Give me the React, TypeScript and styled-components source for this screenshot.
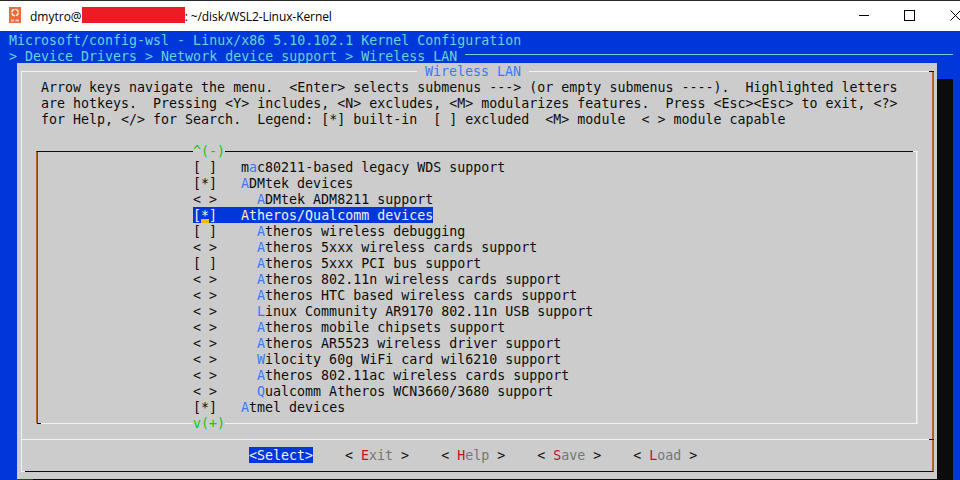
import styled, { createGlobalStyle } from 'styled-components'

const GlobalStyle = createGlobalStyle`
  html, body {
    margin: 0;
    padding: 0;
    background: #0037da;
  }
  body {
    width: 960px;
    height: 480px;
    overflow: hidden;
  }
`

const Window = styled.div`
  width: 960px;
  height: 480px;
  overflow: hidden;
  display: flex;
  flex-direction: column;
`

const TitleBar = styled.div`
  flex: 0 0 31px;
  box-sizing: border-box;
  display: flex;
  align-items: center;
  background: #ffffff;
  border-top: 1px solid #2a2a2a;
  padding-left: 9px;
  font-family: 'Open Sans', sans-serif;
  font-size: 12px;
  color: #000000;
`

const AppIcon = styled.svg`
  width: 12px;
  height: 16px;
  margin: 0 9px 2px 0;
  flex: none;
`

const Redacted = styled.span`
  display: inline-block;
  width: 103px;
  height: 16px;
  margin-bottom: 2px;
  background: #ed1c24;
`

const TitleText = styled.span`
  white-space: pre;
`

const TitlePath = styled(TitleText)`
  letter-spacing: -0.08px;
`

const Controls = styled.div`
  margin: 0 -1px 2px auto;
  display: flex;
  align-items: center;
  gap: 35px;
`

const ControlIcon = styled.svg`
  width: 11px;
  height: 11px;
  display: block;
`

const Terminal = styled.div`
  flex: 1;
  min-height: 0;
  background: #0037da;
  font-family: 'DejaVu Sans Mono', monospace;
  font-size: 13.3px;
  line-height: 16px;
  white-space: pre;
  color: #0c0c0c;
`

const Header = styled.div`
  box-sizing: border-box;
  height: 32px;
  padding: 2px 7px 0 9px;
  color: #61d6d6;
`

const HeaderLine = styled.div`
  height: 16px;
`

const Breadcrumb = styled(HeaderLine)`
  display: flex;
`

const Rule = styled.span`
  flex: 1;
  height: 1px;
  margin-top: 5px;
  background: #61d6d6;
`

const Dialog = styled.div`
  position: relative;
  box-sizing: border-box;
  width: 920px;
  height: 416px;
  margin-left: 17px;
  padding: 8px 3px 7px 4px;
  background: #cccccc;
  box-shadow: 16px 16px 0 #0c0c0c;
`

const Frame = styled.div`
  position: relative;
  box-sizing: border-box;
  height: 100%;
  display: flex;
  flex-direction: column;
  border-top: 1px solid #f2f2f2;
  border-left: 1px solid #f2f2f2;
  border-right: 1px solid #3a78c0;
  border-bottom: 1px solid #0c0c0c;
  box-shadow: inset -1px 0 0 #b5691f;

  &::before {
    content: '';
    position: absolute;
    top: -1px;
    right: -1px;
    width: 5px;
    height: 1px;
    background: #0c0c0c;
  }

  &::after {
    content: '';
    position: absolute;
    bottom: -1px;
    left: -1px;
    width: 4px;
    height: 1px;
    background: #f2f2f2;
  }
`

const DialogTitle = styled.div`
  position: absolute;
  z-index: 1;
  top: 1px;
  left: 400px;
  height: 16px;
  padding: 0 8px;
  background: #cccccc;
  color: #3b78ff;
`

const HelpText = styled.div`
  padding: 8px 0 0 19px;
  height: 56px;
  flex: none;
`

const MenuBox = styled.div`
  position: relative;
  box-sizing: border-box;
  flex: none;
  width: 882px;
  height: 273px;
  margin: 15px 0 0 14px;
  padding-top: 7px;
  border-top: 1px solid #0c0c0c;
  border-left: 1px solid #b5691f;
  border-right: 1px solid #d4e2ee;
  border-bottom: 1px solid #f2f2f2;
  box-shadow: inset 1px 0 0 #2c5aa0, inset -1px 0 0 #f2f2f2;

  &::before {
    content: '';
    position: absolute;
    top: -1px;
    right: -1px;
    width: 5px;
    height: 1px;
    background: #f2f2f2;
  }

  &::after {
    content: '';
    position: absolute;
    bottom: -1px;
    left: 0;
    width: 4px;
    height: 1px;
    background: #0c0c0c;
  }
`

const ScrollMark = styled.div<{ $edge: 'top' | 'bottom' }>`
  position: absolute;
  z-index: 1;
  left: 156px;
  ${p => (p.$edge === 'top' ? 'top: -8px;' : 'bottom: -9px;')}
  background: #cccccc;
  color: #16c60c;
`

const Row = styled.div<{ $selected?: boolean }>`
  position: relative;
  width: 240px;
  height: 16px;
  line-height: 18px;
  margin-left: 156px;
  background: ${p => (p.$selected ? '#0037da' : 'transparent')};
  color: ${p => (p.$selected ? '#f2f2f2' : 'inherit')};
`

const Hotkey = styled.span<{ $selected?: boolean }>`
  color: ${p => (p.$selected ? '#f9f1a5' : '#3b78ff')};
`

const Cursor = styled.span`
  position: absolute;
  left: 8px;
  top: 12px;
  width: 8px;
  height: 4px;
  background: #f8b800;
`

const Divider = styled.div`
  position: relative;
  flex: none;
  height: 1px;
  margin-top: 15px;
  background: #f2f2f2;

  &::after {
    content: '';
    position: absolute;
    top: 0;
    right: -1px;
    width: 5px;
    height: 1px;
    background: #0c0c0c;
  }
`

const ButtonRow = styled.div`
  display: flex;
  padding: 7px 0 0 227px;
  gap: 32px;
`

const Button = styled.span<{ $active?: boolean }>`
  height: 16px;
  line-height: 18px;
  background: ${p => (p.$active ? '#0037da' : 'transparent')};
  color: ${p => (p.$active ? '#f2f2f2' : '#0c0c0c')};
`

const ButtonLabel = styled.span`
  color: #767676;
`

const ButtonKey = styled.span`
  color: #c50f1f;
`

const menu: { mark: string; indent: number; pre?: string; key: string; rest: string; selected?: boolean }[] = [
  { mark: '[ ]', indent: 0, pre: 'm', key: 'a', rest: 'c80211-based legacy WDS support' },
  { mark: '[*]', indent: 0, key: 'A', rest: 'DMtek devices' },
  { mark: '< >', indent: 2, key: 'A', rest: 'DMtek ADM8211 support' },
  { mark: '[*]', indent: 0, key: 'A', rest: 'theros/Qualcomm devices', selected: true },
  { mark: '[ ]', indent: 2, key: 'A', rest: 'theros wireless debugging' },
  { mark: '< >', indent: 2, key: 'A', rest: 'theros 5xxx wireless cards support' },
  { mark: '[ ]', indent: 2, key: 'A', rest: 'theros 5xxx PCI bus support' },
  { mark: '< >', indent: 2, key: 'A', rest: 'theros 802.11n wireless cards support' },
  { mark: '< >', indent: 2, key: 'A', rest: 'theros HTC based wireless cards support' },
  { mark: '< >', indent: 2, key: 'L', rest: 'inux Community AR9170 802.11n USB support' },
  { mark: '< >', indent: 2, key: 'A', rest: 'theros mobile chipsets support' },
  { mark: '< >', indent: 2, key: 'A', rest: 'theros AR5523 wireless driver support' },
  { mark: '< >', indent: 2, key: 'W', rest: 'ilocity 60g WiFi card wil6210 support' },
  { mark: '< >', indent: 2, key: 'A', rest: 'theros 802.11ac wireless cards support' },
  { mark: '< >', indent: 2, key: 'Q', rest: 'ualcomm Atheros WCN3660/3680 support' },
  { mark: '[*]', indent: 0, key: 'A', rest: 'tmel devices' },
]

const buttons = [
  { key: 'E', rest: 'xit' },
  { key: 'H', rest: 'elp' },
  { key: 'S', rest: 'ave' },
  { key: 'L', rest: 'oad' },
]

export default function App() {
  return (
    <Window>
      <GlobalStyle />
      <TitleBar>
        <AppIcon viewBox="0 0 12 16">
          <rect width="12" height="16" fill="#ec6a3c" />
          <circle cx="6" cy="5.5" r="3.2" fill="none" stroke="#fff" strokeWidth="1.3" strokeDasharray="4 1" />
          <path d="M2 13.5H5M6.5 13.5H10" stroke="#f9c8b2" strokeWidth="2" />
        </AppIcon>
        <TitleText>dmytro@</TitleText>
        <Redacted />
        <TitlePath>: ~/disk/WSL2-Linux-Kernel</TitlePath>
        <Controls>
          <ControlIcon viewBox="0 0 11 11">
            <path d="M1 5.5H11" stroke="#000" />
          </ControlIcon>
          <ControlIcon viewBox="0 0 11 11">
            <rect x="0.5" y="0.5" width="10" height="10" fill="none" stroke="#000" />
          </ControlIcon>
          <ControlIcon viewBox="0 0 11 11">
            <path d="M0.5 0.5L10.5 10.5M10.5 0.5L0.5 10.5" stroke="#000" />
          </ControlIcon>
        </Controls>
      </TitleBar>
      <Terminal>
        <Header>
          <HeaderLine>Microsoft/config-wsl - Linux/x86 5.10.102.1 Kernel Configuration</HeaderLine>
          <Breadcrumb>
            {'> Device Drivers > Network device support > Wireless LAN '}
            <Rule />
          </Breadcrumb>
        </Header>
        <Dialog>
          <DialogTitle>Wireless LAN</DialogTitle>
          <Frame>
            <HelpText>
              {'Arrow keys navigate the menu.  <Enter> selects submenus ---> (or empty submenus ----).  Highlighted letters\n'}
              {'are hotkeys.  Pressing <Y> includes, <N> excludes, <M> modularizes features.  Press <Esc><Esc> to exit, <?>\n'}
              {'for Help, </> for Search.  Legend: [*] built-in  [ ] excluded  <M> module  < > module capable'}
            </HelpText>
            <MenuBox>
              <ScrollMark $edge="top">^(-)</ScrollMark>
              {menu.map(item => (
                <Row key={item.key + item.rest} $selected={item.selected}>
                  {item.mark}
                  {'   ' + ' '.repeat(item.indent)}
                  {item.pre}
                  <Hotkey $selected={item.selected}>{item.key}</Hotkey>
                  {item.rest}
                  {item.selected && <Cursor />}
                </Row>
              ))}
              <ScrollMark $edge="bottom">v(+)</ScrollMark>
            </MenuBox>
            <Divider />
            <ButtonRow>
              <Button $active>{'<Select>'}</Button>
              {buttons.map(b => (
                <Button key={b.key}>
                  {'< '}
                  <ButtonKey>{b.key}</ButtonKey>
                  <ButtonLabel>{b.rest}</ButtonLabel>
                  {' >'}
                </Button>
              ))}
            </ButtonRow>
          </Frame>
        </Dialog>
      </Terminal>
    </Window>
  )
}
